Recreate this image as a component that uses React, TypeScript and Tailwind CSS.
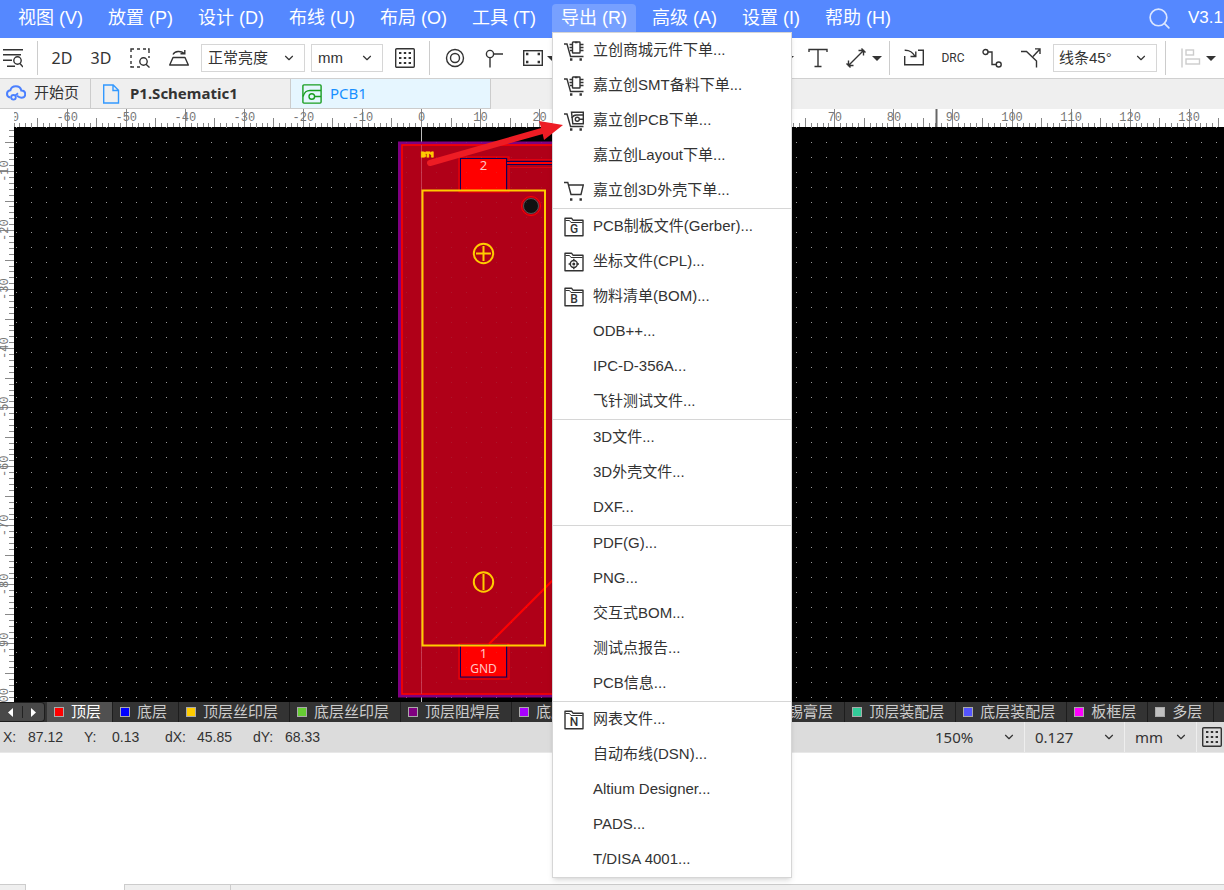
import { type ReactNode } from 'react';
import { ChevronDown, Circle, Image, Minus, Search, Spline, Square } from 'lucide-react';

const menus = ['视图 (V)', '放置 (P)', '设计 (D)', '布线 (U)', '布局 (O)', '工具 (T)', '导出 (R)', '高级 (A)', '设置 (I)', '帮助 (H)'];

const exportGroups: { label: string; icon?: string }[][] = [
  [
    { label: '立创商城元件下单...', icon: 'cartChip' },
    { label: '嘉立创SMT备料下单...', icon: 'cartChip' },
    { label: '嘉立创PCB下单...', icon: 'cartPcb' },
    { label: '嘉立创Layout下单...' },
    { label: '嘉立创3D外壳下单...', icon: 'cart' },
  ],
  [
    { label: 'PCB制板文件(Gerber)...', icon: 'G' },
    { label: '坐标文件(CPL)...', icon: 'target' },
    { label: '物料清单(BOM)...', icon: 'B' },
    { label: 'ODB++...' },
    { label: 'IPC-D-356A...' },
    { label: '飞针测试文件...' },
  ],
  [{ label: '3D文件...' }, { label: '3D外壳文件...' }, { label: 'DXF...' }],
  [{ label: 'PDF(G)...' }, { label: 'PNG...' }, { label: '交互式BOM...' }, { label: '测试点报告...' }, { label: 'PCB信息...' }],
  [
    { label: '网表文件...', icon: 'N' },
    { label: '自动布线(DSN)...' },
    { label: 'Altium Designer...' },
    { label: 'PADS...' },
    { label: 'T/DISA 4001...' },
  ],
];

const layers = [
  { name: '顶层', color: 'bg-[#ff0000]', active: true },
  { name: '底层', color: 'bg-[#0000ff]' },
  { name: '顶层丝印层', color: 'bg-[#ffcc00]' },
  { name: '底层丝印层', color: 'bg-[#66cc33]' },
  { name: '顶层阻焊层', color: 'bg-[#800080]' },
  { name: '底层阻焊层', color: 'bg-[#aa00ff]' },
  { name: '顶层锡膏层', color: 'bg-[#808080]' },
  { name: '底层锡膏层', color: 'bg-[#800000]' },
  { name: '顶层装配层', color: 'bg-[#33cc99]' },
  { name: '底层装配层', color: 'bg-[#5555ff]' },
  { name: '板框层', color: 'bg-[#ff00ff]' },
  { name: '多层', color: 'bg-[#c0c0c0]' },
];

const readouts = [
  { label: 'X:', value: '87.12', width: 'w-[81px]', labelWidth: 'w-[25px]' },
  { label: 'Y:', value: '0.13', width: 'w-[81px]', labelWidth: 'w-7' },
  { label: 'dX:', value: '45.85', width: 'w-[88px]', labelWidth: 'w-8' },
  { label: 'dY:', value: '68.33', width: 'w-[88px]', labelWidth: 'w-8' },
];

// pixels per ruler unit
const UNIT = 5.905;

function Svg({ children, className = '' }: { children: ReactNode; className?: string }) {
  return (
    <svg viewBox="0 0 20 20" fill="none" stroke="currentColor" strokeWidth="1.4" aria-hidden="true" className={`h-5 w-5 shrink-0 ${className}`}>
      {children}
    </svg>
  );
}

function Tool({ label, children }: { label: string; children: ReactNode }) {
  return (
    <button type="button" aria-label={label} className="flex h-5 w-5 shrink-0 items-center justify-center whitespace-nowrap">
      {children}
    </button>
  );
}

function Caret() {
  return (
    <button type="button" aria-label="更多" className="flex h-5 w-[10px] shrink-0 items-center">
      <svg viewBox="0 0 10 6" aria-hidden="true" className="h-[6px] w-[10px]">
        <path d="M0 1h10L5 6z" fill="#333" />
      </svg>
    </button>
  );
}

function Picker({ label, value, className }: { label: string; value: string; className: string }) {
  return (
    <div className={`relative shrink-0 ${className}`}>
      <select aria-label={label} className="h-full w-full appearance-none bg-transparent outline-none">
        <option>{value}</option>
      </select>
      <ChevronDown size={14} strokeWidth={2} className="pointer-events-none absolute right-2 top-1/2 -translate-y-1/2" />
    </div>
  );
}

function GridIcon() {
  return (
    <Svg>
      <rect x="0.7" y="0.7" width="18.6" height="18.6" rx="1" />
      <path d="M4 5h12M4 10h12M4 15h12" strokeWidth="2" strokeDasharray="2.4 2.4" />
    </Svg>
  );
}

function MenuIcon({ name }: { name: string }) {
  if (name.startsWith('cart')) {
    return (
      <Svg>
        {name === 'cart' ? (
          <path d="M0 1.5h3.8l3.2 12h10L19.3 4H4.5" />
        ) : (
          <path d="M0 3h3l3.5 12.500h13" />
        )}
        {name === 'cartChip' && (
          <>
            <rect x="8.500" y="1" width="7.500" height="11" rx="0.500" />
            <path d="M11 1.500h2.500M5.500 3.500h3M5.500 6.500h3M6 9.500h2.500M16 3.500h3.500M16 6.500h3.500M16 9.500h3.500" />
          </>
        )}
        {name === 'cartPcb' && (
          <>
            <path d="M7.500 1.200h11.800v11.500H8.800z" />
            <path d="M7.800 7c1.200-2.200 2.600-3 4.500-3h7M15.500 8.300h4" />
            <circle cx="13.300" cy="8.300" r="2" />
          </>
        )}
        <path d="M6 18.500h2.400M15.500 18.500h2.400" strokeWidth="2.400" />
      </Svg>
    );
  }
  return (
    <span className="relative h-5 w-5 shrink-0">
      <Svg>
        <path d="M1 18.800V1.200h6.500l1.500 2h10v15.600z" strokeLinejoin="round" />
        <path d="M1.500 3.500h4l1.500 2h11.500" strokeWidth="1" />
        {name === 'target' && (
          <>
            <circle cx="9.800" cy="12" r="3.500" />
            <circle cx="9.800" cy="12" r="0.800" />
            <path d="M9.800 6.800v2.500M9.800 14.700v2.500M4.600 12h2.500M12.500 12h2.500" />
          </>
        )}
      </Svg>
      {name.length === 1 && (
        <span className="absolute inset-x-0 top-[6px] text-center font-['Roboto'] text-[12px] font-medium leading-3">{name}</span>
      )}
    </span>
  );
}

function ExportMenu() {
  return (
    <div role="menu" aria-label="导出" className="absolute left-0 top-full z-20 w-[240px] border border-[#d6d6d6] bg-white text-[15px] text-[#333] shadow-md">
      {exportGroups.map((group, index) => (
        <div key={index} className="border-t border-[#d6d6d6] first:border-t-0">
          {group.map((item) => (
            <button key={item.label} type="button" role="menuitem" className="flex h-[35px] w-full items-center gap-[9px] whitespace-nowrap pl-[11px] text-left hover:bg-[#eef3ff]">
              {item.icon ? <MenuIcon name={item.icon} /> : <span className="w-5" />}
              {item.label}
            </button>
          ))}
        </div>
      ))}
    </div>
  );
}

function MenuBar() {
  return (
    <header className="flex h-[38px] shrink-0 items-center bg-[#5588ff] pb-[2px] pl-[9px] pr-1 text-[18px] text-white">
      <nav className="flex shrink-0 gap-[7px]">
        {menus.map((menu) => {
          const open = menu.startsWith('导出');
          return (
            <div key={menu} className="relative">
              <button type="button" aria-haspopup="menu" className={`block h-7 whitespace-nowrap rounded-t-sm px-[9px] leading-7 ${open ? 'bg-[#77a0ff]' : ''}`}>
                {menu}
              </button>
              {open && <ExportMenu />}
            </div>
          );
        })}
      </nav>
      <button type="button" aria-label="搜索" className="ml-auto mr-4 shrink-0">
        <Search size={25} strokeWidth={1.600} className="text-[#dbe6ff]" />
      </button>
      <span className="w-8 shrink-0 whitespace-nowrap text-[17px] font-medium">V3.1</span>
    </header>
  );
}

function Toolbar() {
  return (
    <div className="flex h-[41px] shrink-0 items-center border-b border-[#d0d0d0] bg-white text-[#333]">
      <div className="flex h-[34px] shrink-0 items-center border-r border-[#ccc] pl-[3px] pr-[14px]">
        <Tool label="查找列表">
          <Svg>
            <path d="M0 1.700h20M0 6.700h18M0 12.200h9M4 18.200h8" />
            <circle cx="14.500" cy="12.500" r="3.700" />
            <path d="M17 15.500l3 3.500" />
          </Svg>
        </Tool>
      </div>
      <div className="flex h-[34px] shrink-0 items-center border-r border-[#ccc] px-[14px]">
        <div className="flex gap-[19px] font-['Noto_Sans'] text-[16px]">
          <Tool label="2D">2D</Tool>
          <Tool label="3D">3D</Tool>
          <Tool label="框选缩放">
            <Svg>
              <path d="M1 4V1h3M7 1h3M13 1h3M18 1h1v4M1 7v3M1 13v3M19 8v2M1 18v1h3M7 19h3" />
              <circle cx="13.500" cy="13.500" r="3.700" />
              <path d="M16 16.300l3.500 3.200" />
            </Svg>
          </Tool>
          <Tool label="翻转板子">
            <Svg>
              <path d="M4 9.500h12l3.300 7.500H.7z" strokeLinejoin="round" />
              <path d="M4 6.500c2-3.600 7.500-4 11.500-1M11.500 5.800h4.300V2" />
            </Svg>
          </Tool>
        </div>
        <Picker label="亮度" value="正常亮度" className="ml-3 h-7 w-[104px] border border-[#d6d6d6] pl-[6px] text-[15px]" />
        <Picker label="单位" value="mm" className="ml-[6px] h-7 w-[72px] border border-[#d6d6d6] pl-[6px] text-[15px]" />
        <div className="ml-3 flex">
          <Tool label="网格"><GridIcon /></Tool>
        </div>
      </div>
      <div className="flex h-[34px] shrink-0 items-center pl-[15px]">
        <div className="mr-1 flex gap-[19px]">
          <Tool label="焊盘">
            <Svg>
              <circle cx="10" cy="10" r="8.500" />
              <circle cx="10" cy="10" r="4.500" />
            </Svg>
          </Tool>
          <Tool label="过孔">
            <Svg>
              <circle cx="6" cy="6" r="3.600" />
              <path d="M9.600 6H19M6 9.600V19.500" />
            </Svg>
          </Tool>
          <Tool label="板框">
            <Svg>
              <rect x="0.700" y="2.700" width="18.600" height="14.600" />
              <path d="M3 6h2.400M14.600 6H17M3 14h2.400M14.600 14H17" strokeWidth="2.400" />
            </Svg>
          </Tool>
        </div>
        <Caret />
      </div>
      <div className="flex w-[227px] shrink-0 items-center justify-evenly">
        <Tool label="直线"><Minus size={20} strokeWidth={1.500} /></Tool>
        <Tool label="曲线"><Spline size={20} strokeWidth={1.500} /></Tool>
        <Tool label="圆"><Circle size={20} strokeWidth={1.500} /></Tool>
        <Tool label="矩形"><Square size={20} strokeWidth={1.500} /></Tool>
        <Tool label="图片"><Image size={20} strokeWidth={1.500} /></Tool>
      </div>
      <div className="flex h-[34px] shrink-0 items-center border-r border-[#ccc] pr-[7px]">
        <Caret />
        <div className="ml-[14px] mr-[6px] flex gap-[18px]">
          <Tool label="文本">
            <Svg><path d="M1 4V1.500h18V4M10 1.500v17M6.500 18.500h7" /></Svg>
          </Tool>
          <Tool label="尺寸">
            <Svg><path d="M2.500 17.500L17.500 2.500M2.500 12.500v5H7.500M12.500 2.500h5v5M.5 15.500l4 4M15.500 .5l4 4" /></Svg>
          </Tool>
        </div>
        <Caret />
      </div>
      <div className="flex h-[34px] shrink-0 items-center border-r border-[#ccc] pl-[14px] pr-2">
        <div className="flex gap-[19px]">
          <Tool label="导入变更">
            <Svg><path d="M0.700 8v8.800h18.600V2.200H14M0.700 2.200C6 2 8.500 4 11.500 8.800M6.500 8.500h5.300V3.500" /></Svg>
          </Tool>
          <Tool label="DRC">
            <span className="font-['Roboto'] text-[12px]">DRC</span>
          </Tool>
          <Tool label="布线">
            <Svg>
              <circle cx="3.500" cy="4" r="2.500" />
              <path d="M6 4h4v12.500h4" />
              <circle cx="16.700" cy="16.500" r="2.500" />
            </Svg>
          </Tool>
          <Tool label="推挤">
            <Svg><path d="M0 3.500h5.500L15.500 13v6.500M12 8.500L19 1M14 .9h5V6" /></Svg>
          </Tool>
        </div>
        <Picker label="拐角" value="线条45°" className="ml-3 h-7 w-[104px] border border-[#d6d6d6] pl-[5px] text-[15px]" />
      </div>
      <div className="flex shrink-0 items-center pl-[15px]">
        <Tool label="左对齐">
          <Svg className="text-[#ccc]">
            <path d="M1 0.500v19" />
            <rect x="5" y="2" width="7.500" height="5" />
            <rect x="5" y="11" width="13.500" height="5" />
          </Svg>
        </Tool>
        <div className="ml-[5px] flex"><Caret /></div>
      </div>
    </div>
  );
}

function Tabs() {
  return (
    <div role="tablist" className="flex h-[30px] shrink-0 bg-[#efefef] text-[15px] text-[#333]">
      <button role="tab" type="button" className="flex w-[91px] items-center gap-2 whitespace-nowrap border-b border-r border-[#ccc] pl-[6px]">
        <Svg className="text-[#4b80ff]">
          <path d="M4.500 13.500C2.500 13.200 1 12 1 10c0-2 1.400-3.500 3.400-3.700C5 3.800 7.200 2.300 9.800 2.300c2.800 0 5 1.700 5.500 4.200 2.200.1 3.900 1.600 3.900 3.700 0 2.200-1.700 3.500-3.900 3.500-2 0-3-.8-4.300-1.900" strokeWidth="2" />
          <circle cx="7.500" cy="13.300" r="2.300" strokeWidth="1.800" />
          <path d="M9.200 11.600l2.800-2.300" strokeWidth="1.800" />
        </Svg>
        开始页
      </button>
      <button role="tab" type="button" className="flex w-[200px] items-center gap-[9px] whitespace-nowrap border-b border-r border-[#ccc] pl-[10px] font-['Noto_Sans'] font-bold">
        <Svg className="text-[#3399ff]">
          <path d="M2.700 1h9.500l5.300 5.300V19H2.700zM12 1v5.500h5.500" />
        </Svg>
        P1.Schematic1
      </button>
      <button role="tab" type="button" aria-selected="true" className="flex w-[200px] items-center gap-2 border-b border-r border-[#ccc] bg-[#e6f6ff] pl-[11px] font-['Noto_Sans'] text-[#1890ff]">
        <Svg className="text-[#1a9e22]">
          <rect x="0.900" y="0.900" width="18.200" height="18.200" rx="1" />
          <path d="M1 12.500c1.600-4.800 3.400-6 7-6h11M12.500 12.500h6.500" />
          <circle cx="9.800" cy="12.500" r="2.800" />
        </Svg>
        PCB1
      </button>
    </div>
  );
}

function HorizontalRuler() {
  const count = Math.ceil((window.innerWidth - 14) / UNIT);
  const ticks = Array.from({ length: count }, (_, i) => i - 69);
  return (
    <svg className="h-[18px] w-full font-['Liberation_Mono'] text-[12px]" aria-hidden="true">
      {ticks.map((t) => {
        const x = Math.round(407 + t * UNIT) + 0.5;
        const top = t % 10 === 0 ? 0 : t % 5 === 0 ? 9 : 14;
        return <path key={t} d={`M${x} ${top}V18`} stroke="#888" />;
      })}
      {[-70, ...ticks].filter((t) => t % 10 === 0).map((t) => (
        <text key={t} x={407.5 + t * UNIT} y="12" textAnchor="middle" fill="#777">{t}</text>
      ))}
      <path d="M922.500 0v18" stroke="#666" strokeWidth="2" />
    </svg>
  );
}

function VerticalRuler() {
  const count = Math.ceil((window.innerHeight - 315) / UNIT) + 1;
  const ticks = Array.from({ length: count }, (_, i) => i + 3);
  return (
    <svg className="h-full w-[14px] shrink-0 bg-white font-['Liberation_Mono'] text-[12px]" aria-hidden="true">
      {ticks.map((t) => {
        const y = Math.round(-15 + t * UNIT) + 0.5;
        const left = t % 10 === 0 ? 0 : t % 5 === 0 ? 5 : 9;
        return <path key={t} d={`M${left} ${y}H14`} stroke="#888" />;
      })}
      {ticks.filter((t) => t % 10 === 0).map((t) => (
        <text key={t} transform={`translate(8 ${-15 + t * UNIT}) rotate(-90)`} textAnchor="middle" fill="#777">{-t}</text>
      ))}
    </svg>
  );
}

function Board() {
  return (
    <svg className="h-full min-w-0 flex-1 bg-black font-['Noto_Sans'] text-[13px]" role="img" aria-label="PCB1">
      <defs>
        <pattern id="dots" width="15" height="15" patternUnits="userSpaceOnUse">
          <rect x="2" width="1" height="1" fill="#999" />
        </pattern>
      </defs>
      <rect width="100%" height="100%" fill="url(#dots)" />
      {/* origin sits at ruler 0,0 */}
      <g transform="translate(407 -15)" fill="none">
        <path d="M0.500 0V640" stroke="#bbb" />
        <rect x="-21.500" y="31" width="385" height="553" fill="#b00018" stroke="#800080" strokeWidth="3" />
        <path d="M363 33H-19V582H363" stroke="#ff0000" strokeWidth="1.500" />
        <path d="M0.500 33V582" stroke="#c83850" />
        <rect x="38" y="45" width="50" height="35" stroke="#ff0000" />
        <path d="M88 47.500H363M88 55.500H363" stroke="#e00010" />
        <rect x="39.500" y="46.500" width="46" height="32" fill="#ff0000" stroke="#10005a" />
        <path d="M86 51H363" stroke="#ff0000" strokeWidth="2" />
        <path d="M86 49.500H363M86 52.500H363" stroke="#10005a" />
        <rect x="38" y="532" width="50" height="35" stroke="#ff0000" />
        <rect x="39.500" y="533" width="46" height="32" fill="#ff0000" stroke="#10005a" />
        <path d="M68 532L150 450" stroke="#ff0000" strokeWidth="2" />
        <rect x="1.500" y="78.500" width="122.500" height="455" stroke="#ffcc00" strokeWidth="2" />
        <circle cx="110" cy="94" r="9.500" stroke="#ff0000" />
        <circle cx="110" cy="94" r="7.500" fill="#111" stroke="#555" />
        <g stroke="#ffcc00" strokeWidth="2">
          <circle cx="62.500" cy="141.500" r="9.700" />
          <path d="M62.500 134v15M55 141.500h15" />
          <circle cx="62.500" cy="470" r="9.700" />
          <path d="M62.500 462v16" />
        </g>
        <text x="0" y="45" fill="#ffcc00" stroke="#ffcc00" className="text-[7px] font-black">BT1</text>
        <g fill="#ffc4c4" textAnchor="middle">
          <text x="62.500" y="58">2</text>
          <text x="62.500" y="546">1</text>
          <text x="62.500" y="561" className="text-[12px]">GND</text>
        </g>
      </g>
      <rect x="384" y="14" width="385" height="556" fill="url(#dots)" opacity="0.15" />
    </svg>
  );
}

function LayerBar() {
  return (
    <div className="flex h-5 shrink-0 overflow-hidden bg-[#333] text-[15px] leading-5 text-[#ccc]">
      <div className="mr-[2px] flex w-[45px] shrink-0 items-center rounded-r border border-l-0 border-[#1d1d1d] bg-[#484848]">
        <button type="button" aria-label="向左滚动" className="flex h-3 flex-1 items-center justify-center border-r border-[#222]">
          <svg viewBox="0 0 5 9" className="h-[9px] w-[5px]" aria-hidden="true"><path d="M5 0v9L0 4.500z" fill="#fff" /></svg>
        </button>
        <button type="button" aria-label="向右滚动" className="flex flex-1 items-center justify-center">
          <svg viewBox="0 0 5 9" className="h-[9px] w-[5px]" aria-hidden="true"><path d="M0 0v9l5-4.500z" fill="#fff" /></svg>
        </button>
      </div>
      {layers.map((layer) => (
        <button key={layer.name} type="button" className={`flex shrink-0 items-center gap-[7px] whitespace-nowrap border-r border-[#1d1d1d] pl-[7px] pr-[11px] ${layer.active ? 'bg-[#505050] text-white' : ''}`}>
          <span className={`h-[10px] w-[10px] border border-[#aaa] ${layer.color}`} />
          {layer.name}
        </button>
      ))}
    </div>
  );
}

function StatusBar() {
  return (
    <div className="flex h-[31px] shrink-0 items-center border-b border-[#e8e8e8] bg-[#dcdcdc] pl-[3px] text-[14px] text-[#333]">
      {readouts.map((item) => (
        <div key={item.label} className={`flex shrink-0 ${item.width}`}>
          <span className={item.labelWidth}>{item.label}</span>
          <span>{item.value}</span>
        </div>
      ))}
      <div className="ml-auto flex h-full shrink-0 font-['Noto_Sans'] text-[15px]">
        <Picker label="缩放" value="150%" className="w-[90px] border-r border-[#eee]" />
        <Picker label="网格尺寸" value="0.127" className="w-[100px] border-r border-[#eee] pl-[10px]" />
        <Picker label="状态栏单位" value="mm" className="w-[72px] border-r border-[#eee] pl-[10px]" />
        <div className="flex items-center pl-[5px] pr-[2px]">
          <Tool label="网格属性"><GridIcon /></Tool>
        </div>
      </div>
    </div>
  );
}

export default function App() {
  return (
    <div className="relative flex h-screen flex-col overflow-hidden bg-white font-['Liberation_Sans','Noto_Sans_CJK_SC',sans-serif]">
      <MenuBar />
      <Toolbar />
      <Tabs />
      <div className="flex h-[18px] shrink-0 bg-white pl-[14px]">
        <HorizontalRuler />
      </div>
      <main className="flex min-h-0 flex-1">
        <VerticalRuler />
        <Board />
      </main>
      <LayerBar />
      <StatusBar />
      <div className="h-[131px] shrink-0 bg-white" />
      <div className="flex h-[6px] shrink-0">
        <div className="w-[26px] border-r border-t border-[#ccc] bg-[#efefef]" />
        <div className="w-[98px]" />
        <div className="w-[107px] border border-b-0 border-[#ccc] bg-[#efefef]" />
        <div className="flex-1 border-t border-[#ccc] bg-[#efefef]" />
      </div>
      <svg viewBox="0 0 140 50" className="pointer-events-none absolute left-[425px] top-[118px] z-30 h-[50px] w-[140px]" aria-hidden="true">
        <path d="M5 45L117 13" stroke="#ed1c24" strokeWidth="6" strokeLinecap="round" />
        <path d="M114 3L138 7L119 22L117 13z" fill="#ed1c24" />
      </svg>
    </div>
  );
}
